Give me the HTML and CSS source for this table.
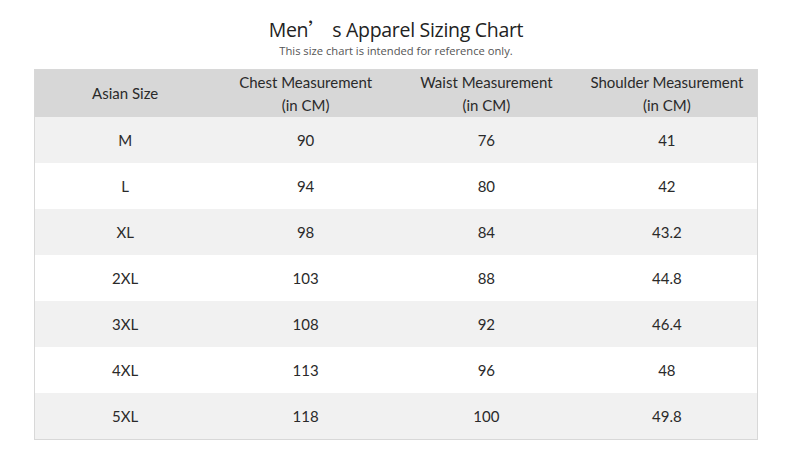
FILE: index.html
```html
<!DOCTYPE html>
<html>
<head>
<meta charset="utf-8">
<link rel="stylesheet" href="styles.css">
</head>
<body>
<div class="page">
  <div class="head">
    <h1 class="title">Men<span class="apos">’</span> s Apparel Sizing Chart</h1>
    <p class="sub">This size chart is intended for reference only.</p>
  </div>
  <table class="chart">
    <thead>
      <tr><th>Asian Size</th><th>Chest Measurement<br>(in CM)</th><th>Waist Measurement<br>(in CM)</th><th>Shoulder Measurement<br>(in CM)</th></tr>
    </thead>
    <tbody>
      <tr><td>M</td><td>90</td><td>76</td><td>41</td></tr>
      <tr><td>L</td><td>94</td><td>80</td><td>42</td></tr>
      <tr><td>XL</td><td>98</td><td>84</td><td>43.2</td></tr>
      <tr><td>2XL</td><td>103</td><td>88</td><td>44.8</td></tr>
      <tr><td>3XL</td><td>108</td><td>92</td><td>46.4</td></tr>
      <tr><td>4XL</td><td>113</td><td>96</td><td>48</td></tr>
      <tr><td>5XL</td><td>118</td><td>100</td><td>49.8</td></tr>
    </tbody>
  </table>
</div>
</body>
</html>
```
FILE: styles.css
```css
html, body { margin: 0; padding: 0; background: #fff; }
.page { padding: 0 32px 0 34px; }
.head { height: 69px; display: flex; flex-direction: column; align-items: center; }
.title {
  margin: 17px 0 0 0;
  font-family: "Open Sans", "Noto Sans", sans-serif;
  font-weight: 400;
  font-size: 19.5px;
  line-height: 24px;
  color: #222;
  letter-spacing: -0.3px;
}
.apos { font-family: "Noto Sans CJK SC", sans-serif; }
.sub {
  margin: 1px 0 0 0;
  font-family: "Open Sans", "Noto Sans", sans-serif;
  font-size: 11.2px;
  line-height: 15px;
  color: #555;
}
.chart {
  width: 724px;
  border-collapse: collapse;
  table-layout: fixed;
  border: 1px solid #d8d8d8;
  font-family: "Lato", "Open Sans", sans-serif;
  font-size: 15px;
  color: #2a2a2a;
}
.chart th, .chart td { text-align: center; padding: 0; font-weight: 400; }
.chart thead th { background: #d7d7d7; height: 47px; line-height: 23px; }
.chart tbody td { height: 46px; }
.chart tbody tr:nth-child(odd) td { background: #f1f1f1; }
.chart tbody tr:nth-child(even) td { background: #fff; }
```
